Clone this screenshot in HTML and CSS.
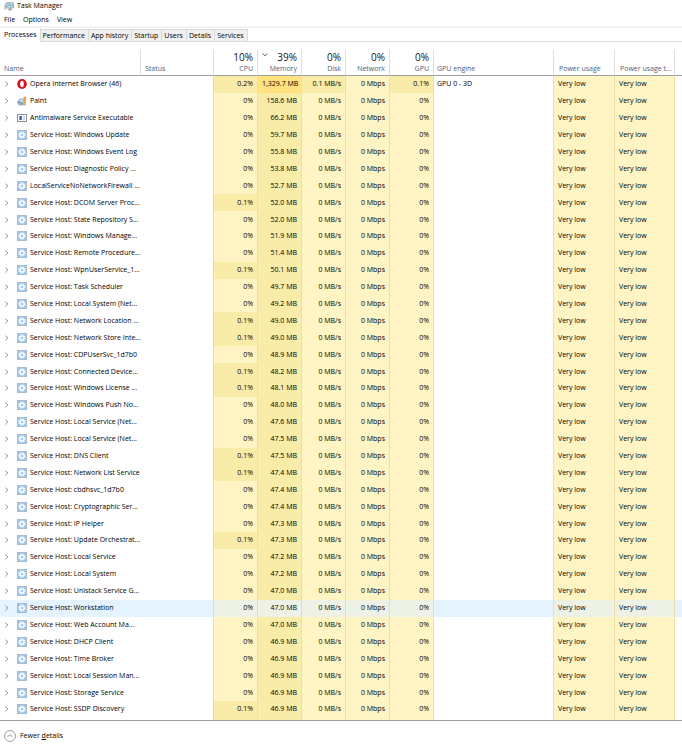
FILE: index.html
```html
<!DOCTYPE html>
<html lang="en">
<head>
    <meta charset="UTF-8">
    <meta name="viewport" content="width=device-width, initial-scale=1.0">
    <title>Task Manager</title>
    <link rel="stylesheet" href="styles.css">
</head>
<body>
    <!-- Icons shared by the rows -->
    <svg class="sprite" aria-hidden="true">
        <symbol id="icon-chevron" viewBox="0 0 5 8">
            <path d="M1.4 1.6 L3.8 4 L1.4 6.4" fill="none" stroke="#8a8a8a" stroke-width="1" />
        </symbol>
        <symbol id="icon-service" viewBox="0 0 10 10">
            <rect x="0.5" y="0.5" width="9" height="9" fill="#9cc6ec" stroke="#a9bccf" stroke-width="1" />
            <circle cx="5" cy="5" r="2.1" fill="none" stroke="#fff" stroke-width="1.5" />
            <circle cx="5" cy="5" r="3.2" fill="none" stroke="#fff" stroke-width="1" stroke-dasharray="1.3 1.21" />
        </symbol>
        <symbol id="icon-opera" viewBox="0 0 10 10">
            <ellipse cx="5" cy="5" rx="4.8" ry="5" fill="#d8101c" />
            <ellipse cx="5" cy="5" rx="1.8" ry="3.3" fill="#fff" />
        </symbol>
        <symbol id="icon-paint" viewBox="0 0 10 10">
            <path d="M0.5 6.5 C0.5 4 3 2.6 5.5 2.8 C8 3 8.6 5 7.6 6.2 C7 7 8 8 6.8 8.8 C5 9.8 0.5 9.4 0.5 6.5 Z" fill="#9cc9e6" stroke="#5f9cc4" stroke-width="0.5" />
            <circle cx="2.4" cy="6.4" r="0.9" fill="#d9482b" />
            <circle cx="4.3" cy="4.6" r="0.8" fill="#fff" />
            <circle cx="4.8" cy="7.6" r="0.9" fill="#4da04a" />
            <path d="M6.2 1.2 L9.2 0.4 L9 3 L8.6 9.4 L7.2 9.4 L7 3.2 Z" fill="#f0a03a" />
        </symbol>
        <symbol id="icon-defender" viewBox="0 0 10 8">
            <rect x="0.5" y="0.5" width="9" height="7" fill="#fff" stroke="#8a949e" stroke-width="1" />
            <rect x="2.4" y="2" width="2.4" height="4" fill="#2a62b4" />
            <path d="M6 2.8 H8 M6 4.3 H8 M6 5.8 H8" stroke="#8a99a8" stroke-width="0.6" />
        </symbol>
    </svg>

    <header class="titlebar">
        <svg class="app-icon" viewBox="0 0 10 9" aria-hidden="true">
            <rect x="2.2" y="0.8" width="7.2" height="5.2" rx="0.6" fill="#cfe6f2" stroke="#6c7f8c" stroke-width="0.7" />
            <path d="M2.6 4.2 L4.4 3.6 L5.4 1.8 L6.6 4.4 L9 2.6" fill="none" stroke="#2f8fb8" stroke-width="0.7" />
            <path d="M0.4 2.4 V7.6 H1.8 V2.4 Z" fill="#aab4bc" />
            <path d="M4.2 8.2 H8 L7.2 6.4 H5 Z" fill="#8a97a0" />
        </svg>
        <h1>Task Manager</h1>
    </header>

    <nav class="menubar">
        <button type="button">File</button>
        <button type="button">Options</button>
        <button type="button">View</button>
    </nav>

    <div class="tabs" role="tablist">
        <button type="button" role="tab" class="tab active" aria-selected="true">Processes</button>
        <button type="button" role="tab" class="tab">Performance</button>
        <button type="button" role="tab" class="tab">App history</button>
        <button type="button" role="tab" class="tab">Startup</button>
        <button type="button" role="tab" class="tab">Users</button>
        <button type="button" role="tab" class="tab">Details</button>
        <button type="button" role="tab" class="tab">Services</button>
    </div>

    <main>
        <table>
            <colgroup>
                <col class="col-name">
                <col class="col-status">
                <col class="col-usage" span="5">
                <col class="col-engine">
                <col class="col-power">
                <col class="col-trend">
                <col>
            </colgroup>
            <thead>
                <tr>
                    <th scope="col">Name</th>
                    <th scope="col">Status</th>
                    <th scope="col" class="num"><span class="total">10%</span>CPU</th>
                    <th scope="col" class="num sorted">
                        <svg class="sort-arrow" viewBox="0 0 6 4" aria-hidden="true">
                            <path d="M0.6 0.6 L3 2.8 L5.4 0.6" fill="none" stroke="#4a6a8a" stroke-width="1" />
                        </svg>
                        <span class="total">39%</span>Memory
                    </th>
                    <th scope="col" class="num"><span class="total">0%</span>Disk</th>
                    <th scope="col" class="num"><span class="total">0%</span>Network</th>
                    <th scope="col" class="num"><span class="total">0%</span>GPU</th>
                    <th scope="col" class="engine">GPU engine</th>
                    <th scope="col" class="power">Power usage</th>
                    <th scope="col" class="power">Power usage t...</th>
                    <td></td>
                </tr>
            </thead>
            <tbody id="processes"></tbody>
        </table>
    </main>

    <footer>
        <button type="button" class="details-toggle">
            <svg viewBox="0 0 12 12" aria-hidden="true">
                <circle cx="6" cy="6" r="5.5" fill="none" stroke="#888" stroke-width="0.8" />
                <path d="M3.4 7 L6 4.6 L8.6 7" fill="none" stroke="#777" stroke-width="0.8" />
            </svg>
            <span>Fewer <u>d</u>etails</span>
        </button>
    </footer>
    <script src="script.js"></script>
</body>
</html>
```
FILE: styles.css
```css
/* General Styles */
* {
    box-sizing: border-box;
}

body {
    display: flex;
    flex-direction: column;
    min-height: 100vh;
    margin: 0;
    background-color: #fff;
    color: #000;
    font-family: "Open Sans", "Noto Sans", sans-serif;
    font-size: 7px;
    line-height: 12px;
}

button {
    padding: 0;
    border: none;
    background: none;
    color: inherit;
    font: inherit;
    white-space: nowrap;
}

.sprite {
    display: none;
}

/* Title and menu */
.titlebar {
    display: flex;
    align-items: center;
    gap: 3px;
    height: 12px;
    padding-left: 4px;
}

.titlebar h1 {
    margin: 0;
    font-size: 7px;
    font-weight: normal;
}

.app-icon {
    width: 10px;
    height: 9px;
}

.menubar {
    display: flex;
    gap: 8px;
    height: 14px;
    padding: 2px 4px 0;
}

/* Tabs */
.tabs {
    display: flex;
    align-items: flex-end;
    height: 16px;
    border-top: 2px solid #f3f3f3;
    border-bottom: 1px solid #dcdcdc;
}

.tab {
    height: 12px;
    padding: 0 3px 0 2px;
    border: 1px solid #d9d9d9;
    border-left: none;
    border-bottom: none;
    background-color: #f0f0f0;
}

.tab.active {
    height: 14px;
    margin-bottom: -1px;
    padding: 0 3px 1px 4px;
    border-top: none;
    background-color: #fff;
}

/* Process table */
main {
    display: flex;
    flex: 1;
    flex-direction: column;
    padding-top: 8px;
    border-bottom: 1px solid #a0a0a0;
}

table {
    flex: 1;
    width: 100%;
    table-layout: fixed;
    border-collapse: separate;
    border-spacing: 0;
}

.col-name {
    width: 141px;
}

.col-status {
    width: 73px;
}

.col-usage {
    width: 44px;
}

.col-engine {
    width: 120px;
}

.col-power {
    width: 61px;
}

.col-trend {
    width: 60px;
}

thead th,
thead td {
    height: 26px;
    padding: 0 4px;
    border-bottom: 1px solid #a0a0a0;
    border-right: 1px solid #dedede;
    color: #4c607a;
    font-weight: normal;
    text-align: left;
    vertical-align: bottom;
    white-space: nowrap;
}

thead td {
    border-right: none;
}

thead .num,
.num {
    text-align: right;
}

thead .engine,
.engine {
    padding-left: 3px;
}

thead .power {
    padding-left: 5px;
    padding-right: 0;
}

.total {
    display: block;
    color: #111;
    font-size: 10px;
}

.sorted {
    position: relative;
}

.sort-arrow {
    position: absolute;
    top: 3px;
    left: 4px;
    width: 6px;
    height: 4px;
}

tbody td {
    padding: 0 4px;
    white-space: nowrap;
}

.process {
    display: flex;
    align-items: center;
}

.chevron {
    flex-shrink: 0;
    width: 5px;
    height: 8px;
    margin-right: 8px;
}

.process-icon {
    flex-shrink: 0;
    width: 10px;
    height: 10px;
    margin-right: 3px;
}

/* Heat map */
.status,
.engine,
.heat {
    border-right: 1px solid #eedfa4;
}

.heat {
    background-color: #fff4c4;
}

.heat.medium {
    background-color: #f9eca8;
}

.heat.high {
    background-color: #ffe180;
}

.filler td {
    height: 2px;
}

tr.hover td {
    background-color: #e5f3ff;
}

tr.hover .heat {
    background-color: #eef2e6;
}

/* Footer */
footer {
    display: flex;
    align-items: center;
    height: 29px;
    padding-left: 4px;
}

.details-toggle {
    display: flex;
    align-items: center;
    gap: 4px;
}

.details-toggle svg {
    width: 12px;
    height: 12px;
}
```
FILE: script.js
```js
// name, cpu, memory in MB
const processes = [
    ["Opera Internet Browser (46)", "0.2%", "1,329.7"],
    ["Paint", "0%", "158.6"],
    ["Antimalware Service Executable", "0%", "66.2"],
    ["Service Host: Windows Update", "0%", "59.7"],
    ["Service Host: Windows Event Log", "0%", "55.8"],
    ["Service Host: Diagnostic Policy ...", "0%", "53.8"],
    ["LocalServiceNoNetworkFirewall ...", "0%", "52.7"],
    ["Service Host: DCOM Server Proc...", "0.1%", "52.0"],
    ["Service Host: State Repository S...", "0%", "52.0"],
    ["Service Host: Windows Manage...", "0%", "51.9"],
    ["Service Host: Remote Procedure...", "0%", "51.4"],
    ["Service Host: WpnUserService_1...", "0.1%", "50.1"],
    ["Service Host: Task Scheduler", "0%", "49.7"],
    ["Service Host: Local System (Net...", "0%", "49.2"],
    ["Service Host: Network Location ...", "0.1%", "49.0"],
    ["Service Host: Network Store Inte...", "0.1%", "49.0"],
    ["Service Host: CDPUserSvc_1d7b0", "0%", "48.9"],
    ["Service Host: Connected Device...", "0.1%", "48.2"],
    ["Service Host: Windows License ...", "0.1%", "48.1"],
    ["Service Host: Windows Push No...", "0%", "48.0"],
    ["Service Host: Local Service (Net...", "0%", "47.6"],
    ["Service Host: Local Service (Net...", "0%", "47.5"],
    ["Service Host: DNS Client", "0.1%", "47.5"],
    ["Service Host: Network List Service", "0.1%", "47.4"],
    ["Service Host: cbdhsvc_1d7b0", "0%", "47.4"],
    ["Service Host: Cryptographic Ser...", "0%", "47.4"],
    ["Service Host: IP Helper", "0%", "47.3"],
    ["Service Host: Update Orchestrat...", "0.1%", "47.3"],
    ["Service Host: Local Service", "0%", "47.2"],
    ["Service Host: Local System", "0%", "47.2"],
    ["Service Host: Unistack Service G...", "0%", "47.0"],
    ["Service Host: Workstation", "0%", "47.0"],
    ["Service Host: Web Account Ma...", "0%", "47.0"],
    ["Service Host: DHCP Client", "0%", "46.9"],
    ["Service Host: Time Broker", "0%", "46.9"],
    ["Service Host: Local Session Man...", "0%", "46.9"],
    ["Service Host: Storage Service", "0%", "46.9"],
    ["Service Host: SSDP Discovery", "0.1%", "46.9"]
];

const icons = {
    "Opera Internet Browser (46)": "opera",
    "Paint": "paint",
    "Antimalware Service Executable": "defender"
};

function heat(value) {
    return parseFloat(value) > 0 ? "heat medium" : "heat";
}

function renderRow([name, cpu, memory]) {
    const busy = name.startsWith("Opera");
    const disk = busy ? "0.1 MB/s" : "0 MB/s";
    const gpu = busy ? "0.1%" : "0%";
    return `
        <tr class="${name.endsWith("Workstation") ? "hover" : ""}">
            <td><div class="process">
                <svg class="chevron"><use href="#icon-chevron" /></svg>
                <svg class="process-icon"><use href="#icon-${icons[name] || "service"}" /></svg>
                <span>${name}</span>
            </div></td>
            <td class="status"></td>
            <td class="num ${heat(cpu)}">${cpu}</td>
            <td class="num heat ${busy ? "high" : "medium"}">${memory} MB</td>
            <td class="num ${heat(disk)}">${disk}</td>
            <td class="num heat">0 Mbps</td>
            <td class="num ${heat(gpu)}">${gpu}</td>
            <td class="engine">${busy ? "GPU 0 - 3D" : ""}</td>
            <td class="heat">Very low</td>
            <td class="heat">Very low</td>
            <td></td>
        </tr>`;
}

// Thin row that carries the column colours down to the bottom edge
const filler = `
    <tr class="filler">
        <td></td><td class="status"></td>
        <td class="heat medium"></td><td class="heat medium"></td>
        <td class="heat"></td><td class="heat"></td><td class="heat"></td>
        <td class="engine"></td><td class="heat"></td><td class="heat"></td><td></td>
    </tr>`;

document.getElementById("processes").innerHTML = processes.map(renderRow).join("") + filler;
```
